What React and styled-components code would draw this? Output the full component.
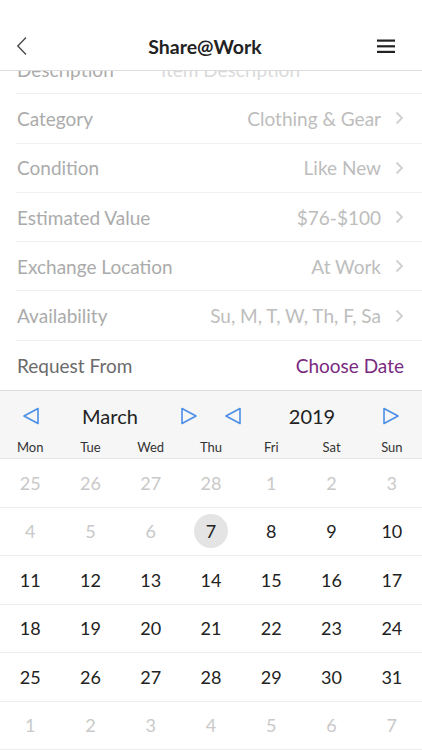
import React from "react";
import styled, { createGlobalStyle } from "styled-components";

const GlobalStyle = createGlobalStyle`
  html, body {
    margin: 0;
    padding: 0;
    background: #fff;
    font-family: Lato, "Open Sans", sans-serif;
  }
`;

const Screen = styled.div`
  width: 422px;
  height: 750px;
  display: flex;
  flex-direction: column;
  overflow: hidden;
  background: #fff;
`;

const Header = styled.div`
  height: 71px;
  flex-shrink: 0;
  display: grid;
  grid-template-columns: 1fr auto 1fr;
  align-items: center;
  padding: 22px 26px 0 12px;
  box-sizing: border-box;
  border-bottom: 1px solid #dcdcdc;
  position: relative;
  z-index: 2;
  background: #fff;
`;

const Title = styled.div`
  font-size: 19.5px;
  font-weight: 700;
  color: #222;
  padding-left: 2px;
`;

const IconBtn = styled.div`
  width: 20px;
  height: 24px;
  display: flex;
  align-items: center;
  justify-content: center;
  justify-self: ${(p) => (p.$end ? "end" : "start")};
`;

const Body = styled.div`
  flex: 1;
  overflow: hidden;
  display: flex;
  flex-direction: column;
`;

// list is scrolled: the first row sits partly under the header
const List = styled.div`
  margin-top: -26px;
  padding-left: 16px;
`;

const Row = styled.div`
  height: 49.3px;
  box-sizing: border-box;
  display: flex;
  align-items: center;
  justify-content: space-between;
  padding-right: 18px;
  border-bottom: ${(p) => (p.$last ? "none" : "1px solid #efefef")};
  font-size: 19px;
`;

const Label = styled.span`
  padding-left: 1px;
  color: ${(p) => (p.$dark ? "#6b6b6b" : "#ababab")};
`;

const Value = styled.span`
  display: flex;
  align-items: center;
  gap: 14px;
  color: ${(p) => (p.$accent ? "#7a2a7f" : "#bdbdbd")};
`;

const Ghost = styled.span`
  color: #dadada;
  margin-right: 104px;
`;

const Calendar = styled.div`
  border-top: 1px solid #dedede;
  display: flex;
  flex-direction: column;
`;

const CalHead = styled.div`
  background: #f6f6f6;
  border-bottom: 1px solid #e4e4e4;
`;

const Nav = styled.div`
  display: grid;
  grid-template-columns: 1fr 1fr;
  height: 48px;
  padding-top: 1px;
  box-sizing: border-box;
`;

const NavHalf = styled.div`
  display: flex;
  align-items: center;
  justify-content: space-between;
  padding: ${(p) => (p.$right ? "0 22px 0 13px" : "0 13px 0 22px")};
`;

const NavLabel = styled.span`
  font-size: 20px;
  color: #222;
`;

const Weekdays = styled.div`
  display: grid;
  grid-template-columns: repeat(7, 1fr);
  height: 19px;
  align-items: start;
`;

const Weekday = styled.span`
  text-align: center;
  font-size: 13px;
  color: #333;
`;

const Week = styled.div`
  display: grid;
  grid-template-columns: repeat(7, 1fr);
  height: 48.5px;
  box-sizing: border-box;
  border-bottom: 1px solid #ececec;
  align-items: center;
`;

const Day = styled.div`
  display: flex;
  justify-content: center;
  align-items: center;
`;

const DayNum = styled.span`
  width: 34px;
  height: 34px;
  border-radius: 50%;
  display: flex;
  align-items: center;
  justify-content: center;
  font-size: 18px;
  color: ${(p) => (p.$muted ? "#c9c9c9" : "#222")};
  background: ${(p) => (p.$selected ? "#e4e4e4" : "transparent")};
`;

const Chevron = () => (
  <svg width="9" height="14" viewBox="0 0 9 14">
    <path d="M1.5 1.5 L7 7 L1.5 12.5" fill="none" stroke="#cfcfcf" strokeWidth="1.8" />
  </svg>
);

const Triangle = ({ dir }) => (
  <svg width="18" height="18" viewBox="0 0 18 18">
    {dir === "left" ? (
      <path d="M16 1.5 L2 9 L16 16.5 Z" fill="none" stroke="#4a8fe7" strokeWidth="1.6" strokeLinejoin="round" />
    ) : (
      <path d="M2 1.5 L16 9 L2 16.5 Z" fill="none" stroke="#4a8fe7" strokeWidth="1.6" strokeLinejoin="round" />
    )}
  </svg>
);

const rows = [
  { label: "Category", value: "Clothing & Gear" },
  { label: "Condition", value: "Like New" },
  { label: "Estimated Value", value: "$76-$100" },
  { label: "Exchange Location", value: "At Work" },
  { label: "Availability", value: "Su, M, T, W, Th, F, Sa" },
];

const weeks = [
  [[25, 1], [26, 1], [27, 1], [28, 1], [1, 1], [2, 1], [3, 1]],
  [[4, 1], [5, 1], [6, 1], [7, 0, 1], [8], [9], [10]],
  [[11], [12], [13], [14], [15], [16], [17]],
  [[18], [19], [20], [21], [22], [23], [24]],
  [[25], [26], [27], [28], [29], [30], [31]],
  [[1, 1], [2, 1], [3, 1], [4, 1], [5, 1], [6, 1], [7, 1]],
];

export default function App() {
  return (
    <>
      <GlobalStyle />
      <Screen>
        <Header>
          <IconBtn>
            <svg width="12" height="20" viewBox="0 0 12 20">
              <path d="M10 1.5 L1.8 10 L10 18.5" fill="none" stroke="#444" strokeWidth="1.3" />
            </svg>
          </IconBtn>
          <Title>Share@Work</Title>
          <IconBtn $end>
            <svg width="18" height="16" viewBox="0 0 18 16">
              <rect x="0" y="1.5" width="18" height="2.2" fill="#222" />
              <rect x="0" y="7.2" width="18" height="2.2" fill="#222" />
              <rect x="0" y="12.8" width="18" height="2.2" fill="#222" />
            </svg>
          </IconBtn>
        </Header>
        <Body>
          <List>
            <Row>
              <Label>Description</Label>
              <Ghost>Item Description</Ghost>
            </Row>
            {rows.map((r) => (
              <Row key={r.label}>
                <Label>{r.label}</Label>
                <Value>
                  {r.value}
                  <Chevron />
                </Value>
              </Row>
            ))}
            <Row $last>
              <Label $dark>Request From</Label>
              <Value $accent>Choose Date</Value>
            </Row>
          </List>
          <Calendar>
            <CalHead>
              <Nav>
                <NavHalf>
                  <Triangle dir="left" />
                  <NavLabel>March</NavLabel>
                  <Triangle dir="right" />
                </NavHalf>
                <NavHalf $right>
                  <Triangle dir="left" />
                  <NavLabel>2019</NavLabel>
                  <Triangle dir="right" />
                </NavHalf>
              </Nav>
              <Weekdays>
                {["Mon", "Tue", "Wed", "Thu", "Fri", "Sat", "Sun"].map((d) => (
                  <Weekday key={d}>{d}</Weekday>
                ))}
              </Weekdays>
            </CalHead>
            {weeks.map((w, i) => (
              <Week key={i}>
                {w.map(([n, muted, sel], j) => (
                  <Day key={j}>
                    <DayNum $muted={!!muted} $selected={!!sel}>
                      {n}
                    </DayNum>
                  </Day>
                ))}
              </Week>
            ))}
          </Calendar>
        </Body>
      </Screen>
    </>
  );
}
